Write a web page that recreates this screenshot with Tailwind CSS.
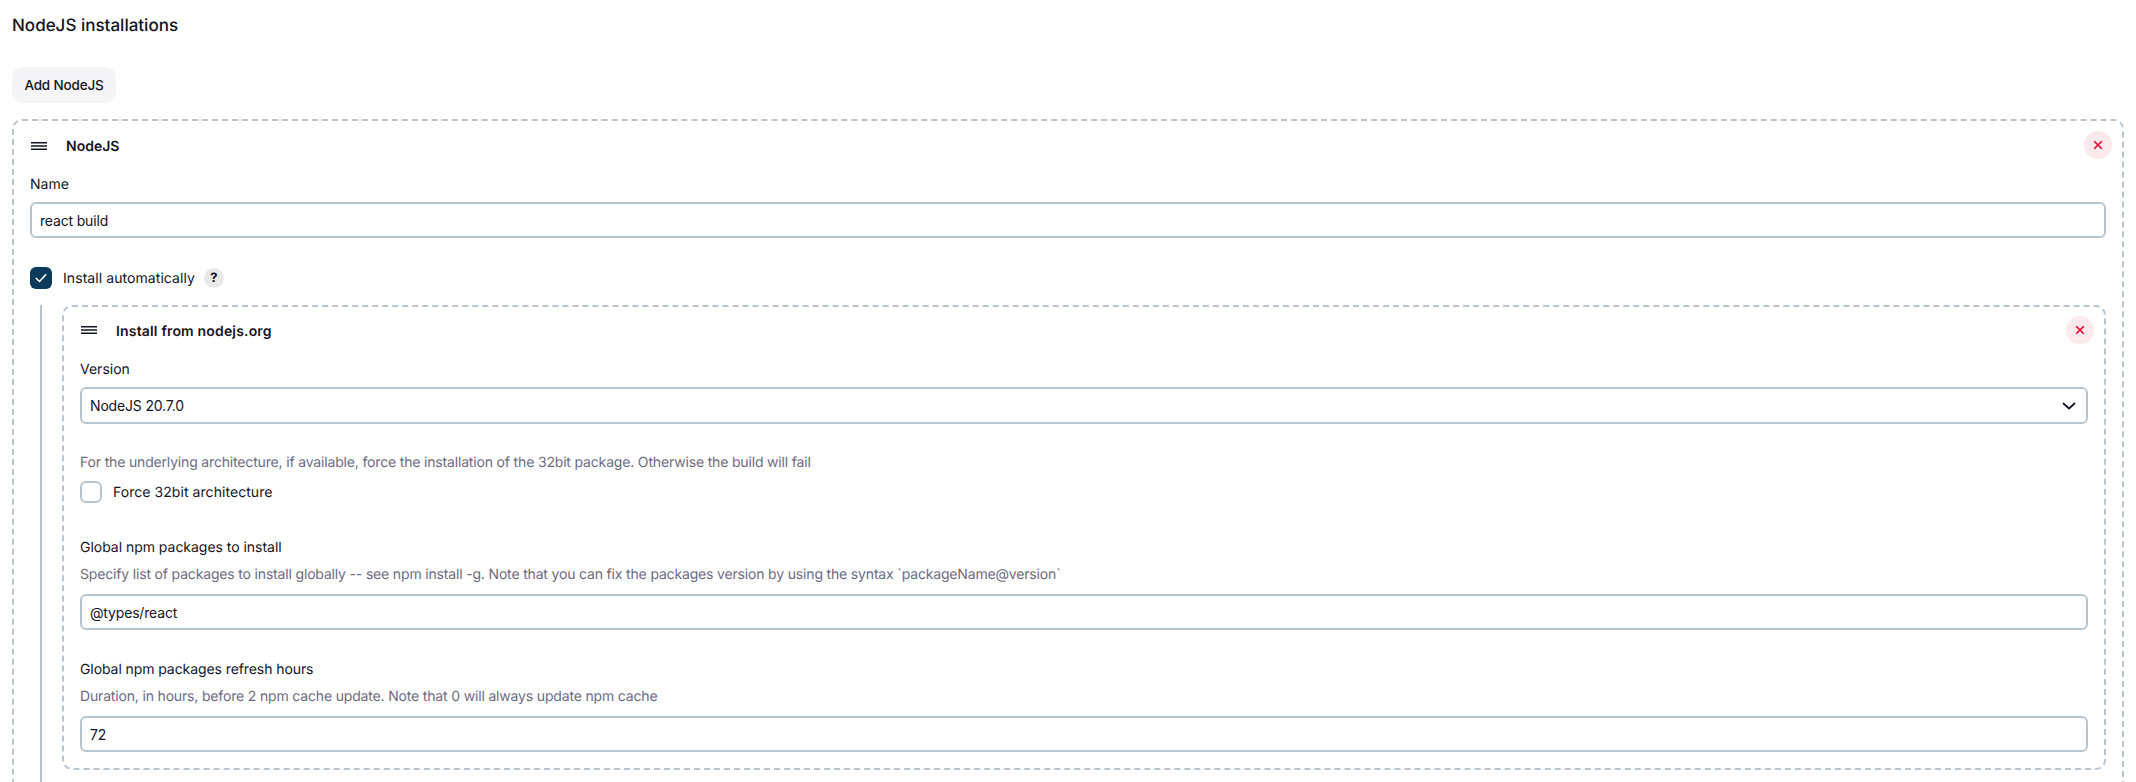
<!DOCTYPE html>
<html lang="en">
<head>
  <meta charset="UTF-8">
  <title>NodeJS installations</title>
  <script src="https://cdn.jsdelivr.net/npm/@tailwindcss/browser@4"></script>
</head>
<body class="h-[782px] overflow-hidden bg-white px-3 font-['Inter',sans-serif] text-sm tracking-[-0.012em] text-[#14141f] [text-rendering:geometricPrecision]">

  <h2 class="pt-[15px] text-[17px] leading-[22px] font-medium tracking-normal">NodeJS installations</h2>

  <button class="mt-[30px] block h-9 w-[104px] rounded-[10px] bg-[#f5f5f7] pt-px text-[13.5px] font-medium">Add NodeJS</button>

  <!-- outer repeatable -->
  <div class="mt-4 rounded-[10px] border-2 border-dashed border-[#b8c4ce] pt-[10px] pr-4 pl-4">
    <div class="flex h-[30px] items-center">
      <svg class="ml-[1px] h-2 w-4" viewBox="0 0 16 8" fill="none" stroke="#14141f" stroke-width="1.4"><path d="M0 .7h16M0 4h16M0 7.3h16"/></svg>
      <span class="mt-px ml-[19px] font-semibold tracking-normal">NodeJS</span>
      <button class="mr-[-6px] mb-[2px] ml-auto flex size-7 items-center justify-center rounded-full bg-[#fbe9eb]">
        <svg class="size-[10px]" viewBox="0 0 10 10" fill="none" stroke="#e6002e" stroke-width="1.6"><path d="M1.2 1.2l7.6 7.6M8.8 1.2L1.2 8.8"/></svg>
      </button>
    </div>

    <label class="mt-[14px] block leading-[20px] tracking-normal">Name</label>
    <input class="mt-[7px] block h-9 w-full rounded-md border-2 border-[#b8c4ce] bg-white px-2 text-sm" value="react build">

    <div class="mt-[29px] flex h-[22px] items-center">
      <span class="flex size-[22px] items-center justify-center rounded-md bg-[#0b3a5c]">
        <svg class="size-[14px]" viewBox="0 0 12 12" fill="none" stroke="#fff" stroke-width="1.4" stroke-linecap="round" stroke-linejoin="round"><path d="M2 6.4l2.7 2.6L10 3.2"/></svg>
      </span>
      <span class="mt-px ml-[11px] tracking-[0.005em]">Install automatically</span>
      <span class="ml-[9px] flex size-5 items-center justify-center rounded-full bg-[#e8e8e8] text-[13px] font-bold">?</span>
    </div>

    <!-- optional block -->
    <div class="mt-4 ml-[10px] border-l-2 border-[#b8c4ce] pl-5">
      <div class="rounded-[10px] border-2 border-dashed border-[#b8c4ce] pt-[9px] pr-4 pb-4 pl-4">
        <div class="flex h-[28px] items-center">
          <svg class="ml-[1px] h-2 w-4" viewBox="0 0 16 8" fill="none" stroke="#14141f" stroke-width="1.4"><path d="M0 .7h16M0 4h16M0 7.3h16"/></svg>
          <span class="mt-1 ml-[19px] font-semibold tracking-[0.012em]">Install from nodejs.org</span>
          <button class="mr-[-6px] ml-auto flex size-7 items-center justify-center rounded-full bg-[#fbe9eb]">
            <svg class="size-[10px]" viewBox="0 0 10 10" fill="none" stroke="#e6002e" stroke-width="1.6"><path d="M1.2 1.2l7.6 7.6M8.8 1.2L1.2 8.8"/></svg>
          </button>
        </div>

        <label class="mt-4 block leading-[20px] tracking-normal">Version</label>
        <div class="relative mt-[7px]">
          <select class="block h-[37px] w-full appearance-none rounded-md border-2 border-[#b8c4ce] bg-white px-2 pt-px text-sm">
            <option>NodeJS 20.7.0</option>
          </select>
          <svg class="absolute top-[15px] right-[12px] h-2 w-[14px]" viewBox="0 0 14 8" fill="none" stroke="#14141f" stroke-width="1.7" stroke-linecap="round" stroke-linejoin="round"><path d="M1.5 1.5L7 6.5l5.5-5"/></svg>
        </div>

        <p class="mt-[29px] leading-[20px] text-[#6d6b80]">For the underlying architecture, if available, force the installation of the 32bit package. Otherwise the build will fail</p>
        <div class="mt-2 flex h-[22px] items-center">
          <span class="size-[22px] rounded-md border-2 border-[#b8c4ce] bg-white"></span>
          <span class="mt-px ml-[11px] tracking-[0.004em]">Force 32bit architecture</span>
        </div>

        <label class="mt-[35px] block leading-[20px] tracking-[-0.002em]">Global npm packages to install</label>
        <p class="mt-[7px] leading-[20px] text-[#6d6b80]">Specify list of packages to install globally -- see npm install -g. Note that you can fix the packages version by using the syntax `packageName@version`</p>
        <input class="mt-[9px] block h-9 w-full rounded-md border-2 border-[#b8c4ce] bg-white px-2 text-sm" value="@types/react">

        <label class="mt-[30px] block leading-[20px] tracking-[-0.006em]">Global npm packages refresh hours</label>
        <p class="mt-[7px] leading-[20px] text-[#6d6b80]">Duration, in hours, before 2 npm cache update. Note that 0 will always update npm cache</p>
        <input class="mt-[9px] block h-9 w-full rounded-md border-2 border-[#b8c4ce] bg-white px-2 text-sm" value="72">
      </div>
      <div class="h-10"></div>
    </div>
  </div>
</body>
</html>
